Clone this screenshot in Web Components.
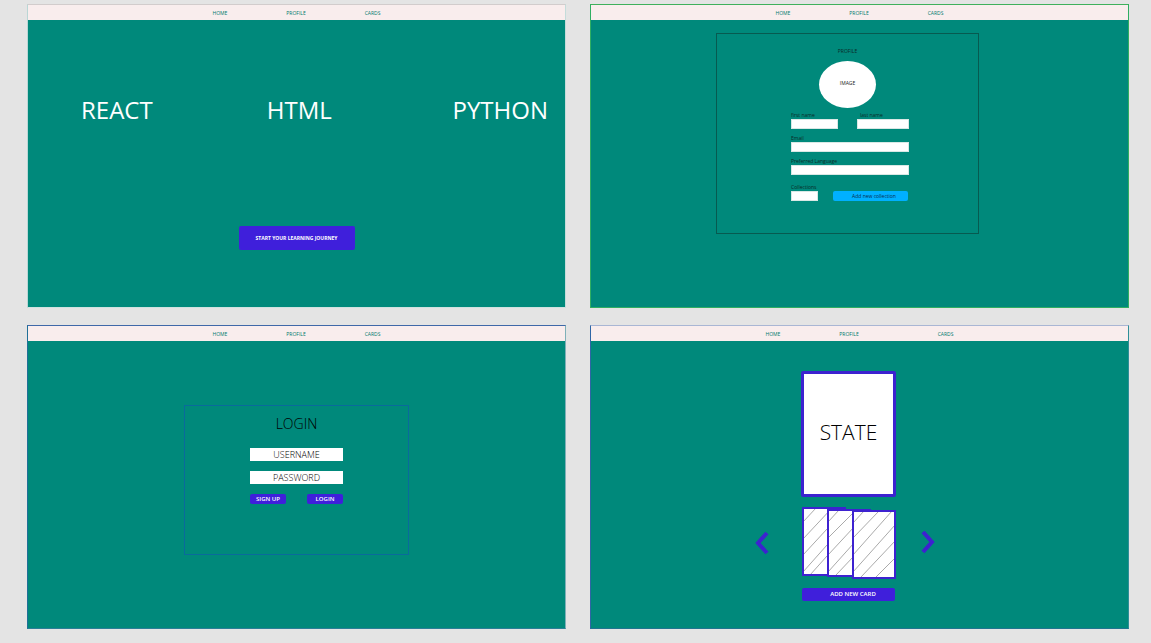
<!DOCTYPE html>
<html lang="en">
<head>
<meta charset="utf-8">
<meta name="viewport" content="width=device-width, initial-scale=1">
<title>Learning cards</title>
<style>
  html { background: #e4e4e4; }
  body { margin: 0; font-family: "Open Sans", "Noto Sans", sans-serif; }
</style>
</head>
<body>
<screen-board>
  <screen-panel style="--edge-top:#d2cccc;--edge-left:#b9d6d5;--edge-right:#c4dcda;--edge-bottom:#cfe2e0">
    <site-nav slot="nav"></site-nav>
    <home-screen></home-screen>
  </screen-panel>
  <screen-panel style="--edge-top:#3fb05c;--edge-left:#2fae62;--edge-right:#2fae62;--edge-bottom:#2fae62">
    <site-nav slot="nav"></site-nav>
    <profile-screen></profile-screen>
  </screen-panel>
  <screen-panel style="--edge-top:#3f68a8;--edge-left:#1f6f98;--edge-right:#7fb0b8;--edge-bottom:#2a7f98">
    <site-nav slot="nav"></site-nav>
    <login-screen></login-screen>
  </screen-panel>
  <screen-panel style="--edge-top:#a9b6d4;--edge-left:#2f66a6;--edge-right:#2f8f98;--edge-bottom:#1f7590">
    <site-nav slot="nav" wide></site-nav>
    <cards-screen></cards-screen>
  </screen-panel>
</screen-board>

<script>
const define = (name, html) => {
  const template = document.createElement('template');
  template.innerHTML = '<style>*{box-sizing:border-box}</style>' + html;
  customElements.define(name, class extends HTMLElement {
    constructor() {
      super();
      this.attachShadow({ mode: 'open' }).append(template.content.cloneNode(true));
    }
  });
};

define('screen-board', `
<style>
  :host { display: grid; box-sizing: border-box; min-height: 100vh;
    grid-template-columns: 1fr 1fr; grid-template-rows: 1fr 1fr;
    gap: 17px 24px; padding: 4px 22px 14px 27px; }
</style>
<slot></slot>`);

define('screen-panel', `
<style>
  :host { display: flex; flex-direction: column; box-sizing: border-box;
    background: #00897b; border: 1px solid;
    border-color: var(--edge-top) var(--edge-right) var(--edge-bottom) var(--edge-left); }
  main { flex: 1; display: flow-root; }
</style>
<slot name="nav"></slot>
<main><slot></slot></main>`);

define('site-nav', `
<style>
  :host { display: block; background: #f9eded; }
  nav { display: flex; justify-content: center; gap: 59px; padding-top: 1px; }
  a { color: #00796d; font-size: 5px; line-height: 14px; text-decoration: none; }
  :host([wide]) a:last-child { margin-left: 20px; }
</style>
<nav><a href="#home">HOME</a><a href="#profile">PROFILE</a><a href="#cards">CARDS</a></nav>`);

define('action-button', `
<style>
  :host { display: block; }
  button { display: block; width: 100%; margin: 0; border: 0; border-radius: 2px;
    padding: var(--pad, 0); background: var(--fill, #3f1fdb); color: var(--ink, #fff);
    font-family: inherit; font-size: var(--size, 6px); font-weight: var(--weight, 600);
    line-height: var(--height, 10px); white-space: nowrap; text-align: center; }
</style>
<button type="button"><slot></slot></button>`);

define('home-screen', `
<style>
  :host { display: block; }
  .topics { display: grid; grid-template-columns: 1fr 1fr auto; padding: 72px 17px 0 53px; }
  h2 { margin: 0; color: #fff; font-size: 24px; line-height: 36px; font-weight: 400; }
  action-button { width: 116px; margin: 98px auto 0; --height: 24px; --size: 5px; --weight: 700; }
</style>
<div class="topics"><h2>REACT</h2><h2>HTML</h2><h2>PYTHON</h2></div>
<action-button>START YOUR LEARNING JOURNEY</action-button>`);

customElements.define('text-field', class extends HTMLElement {
  constructor() {
    super();
    this.attachShadow({ mode: 'open' }).innerHTML = `
<style>
  :host { display: block; }
  label { display: block; color: #0b2b28; font-size: 5px; line-height: 7px; white-space: nowrap; }
  :host([indent]) label { padding-left: 3px; }
  input { display: block; box-sizing: border-box; width: 100%; height: 10px; margin: 0;
    padding: 0 2px; border: 1px solid #d9e8e5; border-radius: 0; background: #fff;
    font-family: inherit; font-size: 6px; }
</style>
<label for="field"></label><input id="field" type="text">`;
    this.shadowRoot.querySelector('label').textContent = this.getAttribute('label');
  }
});

define('profile-screen', `
<style>
  :host { display: block; }
  section { width: 263px; min-height: 201px; margin: 13px 0 0 125px; padding: 12px 69px 0 74px;
    border: 1px solid #075a50; }
  h2 { margin: 0 0 5px -5px; text-align: center; color: #0b2b28; font-size: 5px;
    line-height: 10px; font-weight: 400; }
  figure { display: flex; align-items: center; justify-content: center; width: 57px; height: 47px;
    margin: 0 0 4px 28px; padding-bottom: 4px; border-radius: 50%; background: #fff; color: #222; font-size: 5px; }
  form { display: grid; gap: 6px; }
  .pair { display: flex; justify-content: space-between; align-items: flex-end; }
  .first { width: 47px; } .last { width: 52px; }
  .collect { width: 27px; }
  .add { margin-top: 3px; gap: 15px; justify-content: flex-start; }
  action-button { width: 75px; --fill: #00b0ff; --ink: #0b2b48; --weight: 400; --size: 5px; --pad: 0 0 0 7px; }
</style>
<section>
  <h2>PROFILE</h2>
  <figure>IMAGE</figure>
  <form>
    <div class="pair">
      <text-field class="first" label="first name"></text-field>
      <text-field class="last" label="last name" indent></text-field>
    </div>
    <text-field label="Email"></text-field>
    <text-field label="Preferred Language"></text-field>
    <div class="pair add">
      <text-field class="collect" label="Collections"></text-field>
      <action-button>Add new collection</action-button>
    </div>
  </form>
</section>`);

define('login-screen', `
<style>
  :host { display: block; }
  section { width: 225px; min-height: 150px; margin: 64px auto 0; padding: 8px 65px 0;
    border: 1px solid #0a6a9c; }
  h2 { margin: 0 0 14px; text-align: center; color: #000; font-size: 14px; line-height: 20px; font-weight: 300; }
  input { display: block; width: 100%; height: 13px; margin: 0 0 10px; padding: 0 0 1px; border: 0;
    border-radius: 0; background: #fff; font-family: inherit; font-size: 9px; font-weight: 300;
    line-height: 12px; text-align: center; }
  input::placeholder { color: #000; opacity: 1; }
  .actions { display: flex; justify-content: space-between; }
  action-button { width: 36px; }
</style>
<section>
  <h2>LOGIN</h2>
  <form>
    <input type="text" placeholder="USERNAME" aria-label="Username">
    <input type="password" placeholder="PASSWORD" aria-label="Password">
    <div class="actions"><action-button>SIGN UP</action-button><action-button>LOGIN</action-button></div>
  </form>
</section>`);

define('cards-screen', `
<style>
  :host { display: flex; flex-direction: column; align-items: center; padding: 30px 22px 0 0; }
  article { display: flex; align-items: center; justify-content: center; width: 95px; height: 126px;
    border: 3px solid #3d22d0; border-radius: 2px; background: #fff; color: #000;
    font-size: 21px; font-weight: 300; padding-bottom: 4px; }
  .carousel { display: grid; grid-template-columns: 46px 96px 46px; align-items: center; margin-top: 9px; }
  .carousel button { display: block; width: 14px; margin: 0; padding: 0; border: 0; background: none; }
  .carousel .next { margin-left: 24px; }
  svg { display: block; }
  action-button { width: 93px; margin-top: 8px; --height: 13px; --pad: 0 0 0 9px; }
</style>
<article>STATE</article>
<div class="carousel">
  <button type="button" aria-label="Previous card">
    <svg width="14" height="24" viewBox="0 0 14 24"><path d="M12 2 3 12l9 10" fill="none" stroke="#3d22d0" stroke-width="4"/></svg>
  </button>
  <svg width="96" height="74" viewBox="0 0 96 74" role="img" aria-label="Card stack">
    <g fill="#fff" stroke="#3d22d0" stroke-width="2">
      <rect x="2" y="2" width="42" height="67"/>
      <path d="M2 66 26 39M2 49 26 23M2 33 31 2M9 69 26 50M2 16 15 2" stroke="#aaa" stroke-width="1" fill="none"/>
      <rect x="2" y="2" width="42" height="67" fill="none"/>
      <rect x="27" y="4" width="42" height="66"/>
      <path d="M27 66 53 37M27 49 53 21M27 32 53 6M35 69 53 50M27 16 38 4" stroke="#aaa" stroke-width="1" fill="none"/>
      <rect x="27" y="4" width="42" height="66" fill="none"/>
      <rect x="52" y="5" width="42" height="67"/>
      <path d="M52 66 94 19M52 49 91 5M52 32 78 5M60 71 94 35M75 71 94 52M52 17 63 5" stroke="#aaa" stroke-width="1" fill="none"/>
      <rect x="52" y="5" width="42" height="67" fill="none"/>
    </g>
  </svg>
  <button class="next" type="button" aria-label="Next card">
    <svg width="14" height="24" viewBox="0 0 14 24"><path d="m2 1 9 10-9 10" fill="none" stroke="#3d22d0" stroke-width="4"/></svg>
  </button>
</div>
<action-button>ADD NEW CARD</action-button>`);
</script>
</body>
</html>
